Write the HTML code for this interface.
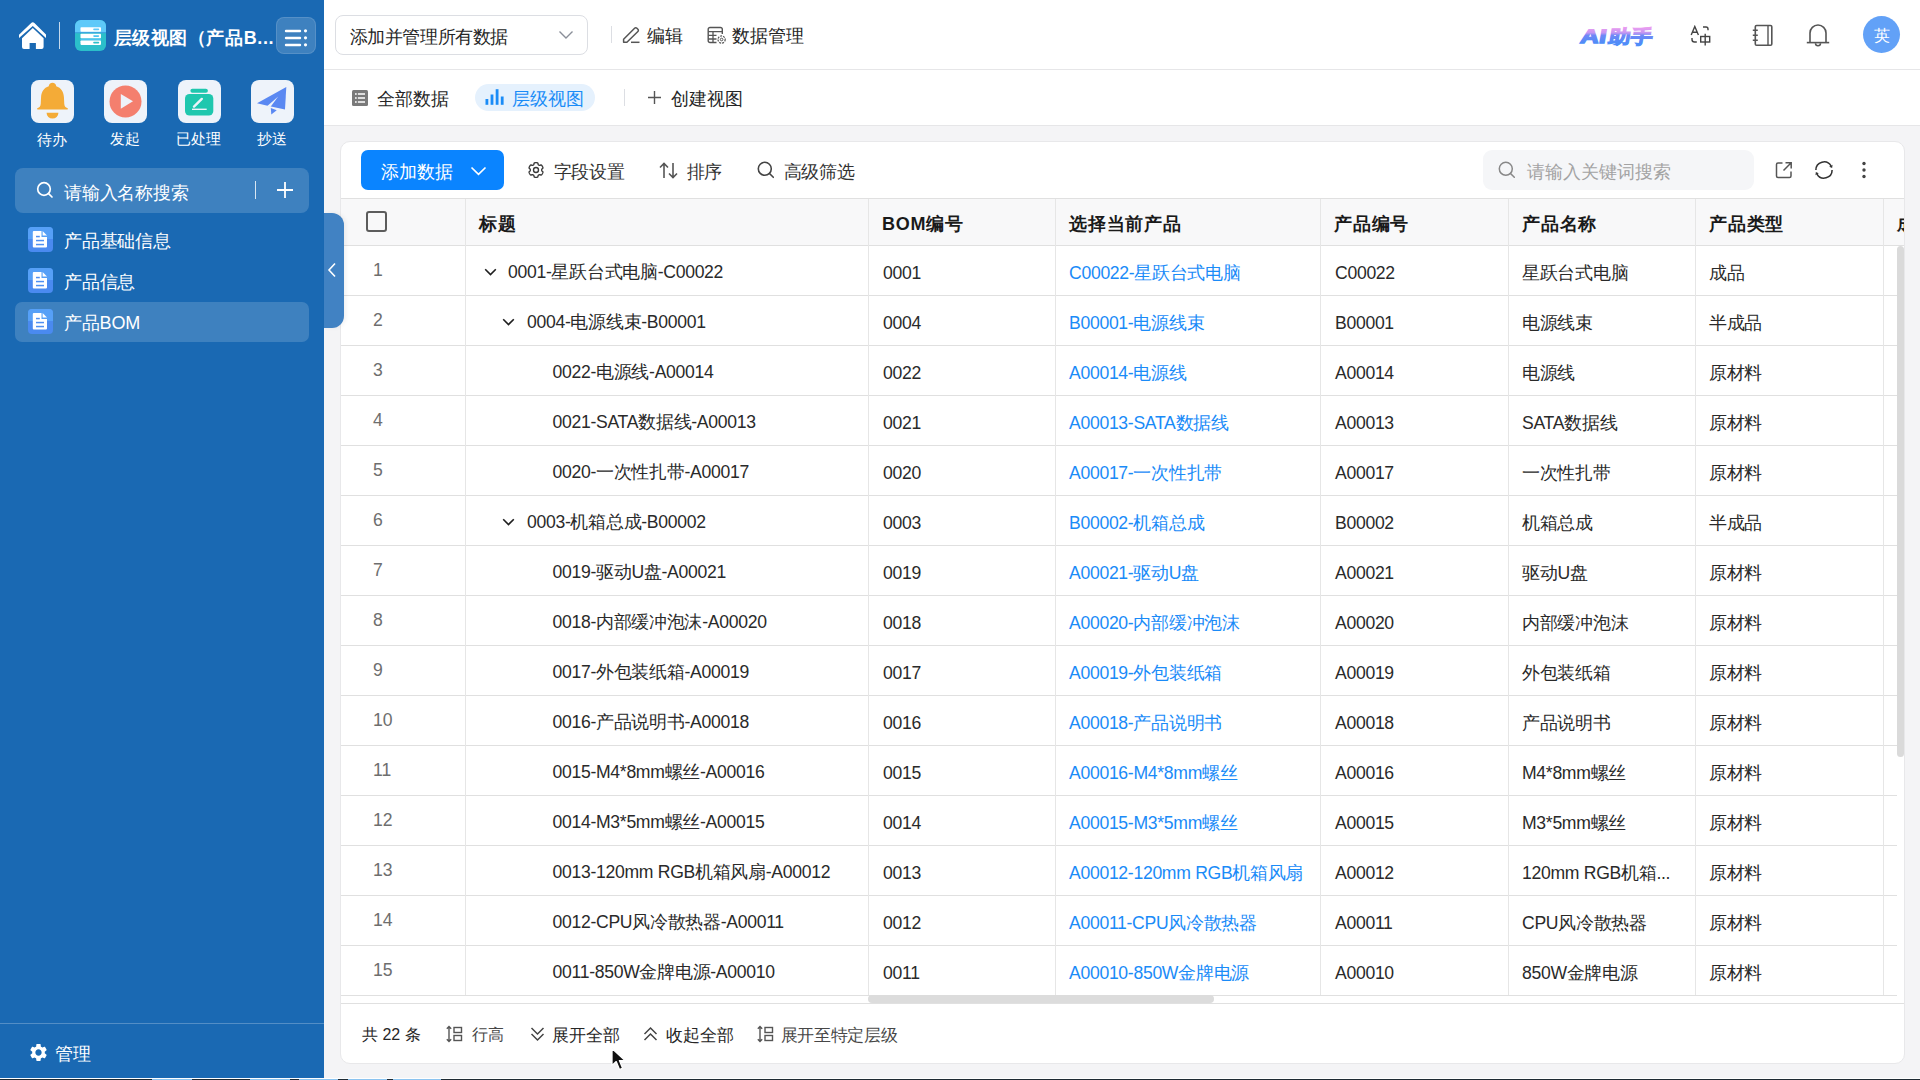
<!DOCTYPE html>
<html><head><meta charset="utf-8">
<style>
*{box-sizing:border-box;margin:0;padding:0}
html,body{width:1920px;height:1080px;overflow:hidden}
body{position:relative;background:#f4f4f6;font-family:"Liberation Sans",sans-serif;color:#262626;font-size:17.6px}
.abs{position:absolute}
#side{position:absolute;left:0;top:0;width:324px;height:1080px;background:#1a69b3;color:#fff}
#top{position:absolute;left:324px;top:0;width:1596px;height:70px;background:#fff;border-bottom:1px solid #e6e6e8}
#tabs{position:absolute;left:324px;top:70px;width:1596px;height:56px;background:#fff;border-bottom:1px solid #e6e6e8}
#card{position:absolute;left:340px;top:141px;width:1565px;height:923px;background:#fff;border:1px solid #e8e8ea;border-radius:10px;overflow:hidden}
.t{position:absolute;white-space:nowrap;line-height:1}
.qa{width:43px;height:43px;border-radius:8px;background:#eef3fa}
.lbl{font-size:15.4px;color:#fff}
.hl{left:0;width:1556px;height:1px;background:#e0e0e0}
.vl{width:1px;background:#e6e6e6}
.th{font-weight:bold;color:#1a1a1a;font-size:18px;letter-spacing:0.75px}
.td{color:#2a2a2a;letter-spacing:-0.3px}
.rn{color:#6e6e6e}
.lk{color:#1a8bf8}
.ft{font-size:16px}
</style></head><body>
<div id="side">
  <!-- home -->
  <svg class="abs" style="left:14px;top:16px" width="40" height="40" viewBox="0 0 40 40">
    <path d="M5 18.7 L17.2 6.9 Q18.8 5.4 20.4 6.9 L32 18.4 L32 21.9 L18.8 9.9 L5 21.9 Z" fill="#fff"/>
    <path d="M8 22.3 L18.8 11.9 L29.6 22.3 V31 a2 2 0 0 1 -2 2 H21.9 V27 H15.6 V33 H10 a2 2 0 0 1 -2 -2 Z" fill="#fff"/>
  </svg>
  <div class="abs" style="left:59px;top:22px;width:1px;height:27px;background:rgba(255,255,255,.75)"></div>
  <!-- app icon -->
  <svg class="abs" style="left:75px;top:20px" width="31" height="31" viewBox="0 0 31 31">
    <defs><clipPath id="ac"><rect width="31" height="31" rx="6"/></clipPath></defs>
    <g clip-path="url(#ac)">
      <rect width="31" height="31" fill="#2bbfca"/>
      <rect width="31" height="12.3" fill="#5ec9f9"/>
      <rect y="12.3" width="31" height="0.9" fill="#3d9ae6"/>
      <rect x="5.5" y="18.5" width="20.5" height="2" fill="#4cc3f2"/>
    </g>
    <rect x="5.5" y="7.2" width="20.5" height="4.5" rx="0.8" fill="#fff"/>
    <rect x="5.5" y="13.8" width="20.5" height="4.5" rx="0.8" fill="#fff"/>
    <rect x="5.5" y="20.4" width="20.5" height="4.5" rx="0.8" fill="#fff"/>
    <rect x="18.2" y="8.6" width="6" height="1.7" rx="0.8" fill="#5ec9f9"/>
    <rect x="18.2" y="15.2" width="6" height="1.7" rx="0.8" fill="#4cc3f2"/>
    <rect x="18.2" y="21.8" width="6" height="1.7" rx="0.8" fill="#2bbfca"/>
  </svg>
  <div class="t" style="left:113.5px;top:28.5px;font-size:18px;letter-spacing:0.6px;font-weight:bold;color:#fff">层级视图（产品B...</div>
  <!-- menu btn -->
  <div class="abs" style="left:276px;top:17px;width:40px;height:37px;border-radius:8px;background:rgba(255,255,255,.16);border:1px solid rgba(255,255,255,.12)"></div>
  <svg class="abs" style="left:284px;top:28.7px" width="24" height="19" viewBox="0 0 24 19">
    <g stroke="#fff" stroke-width="2.4" stroke-linecap="round">
      <line x1="2" y1="2" x2="16" y2="2"/><line x1="2" y1="9" x2="16" y2="9"/><line x1="2" y1="16" x2="16" y2="16"/>
    </g>
    <g fill="#fff"><circle cx="21.5" cy="1.8" r="1.6"/><circle cx="21.5" cy="8.8" r="1.6"/><circle cx="21.5" cy="15.8" r="1.6"/></g>
  </svg>
  <!-- quick actions -->
  <div class="abs qa" style="left:31px;top:80px"></div>
  <div class="abs qa" style="left:104px;top:80px"></div>
  <div class="abs qa" style="left:178px;top:80px"></div>
  <div class="abs qa" style="left:251px;top:80px"></div>
  <svg class="abs" style="left:31px;top:80px" width="43" height="43" viewBox="0 0 43 43"><g transform="translate(21.5 20) scale(1.04) translate(-21.5 -23.8)">
    <path d="M21.5 7.3 c2 0 3.4 1.2 3.6 3.2 c4.6 1.4 7.1 5.3 7.4 10.6 l0.3 6.2 c0.2 2.4 1.3 3.6 2.9 4.3 c0.7 0.3 0.8 1.3 0.1 1.3 H7.2 c-0.7 0 -0.6 -1 0.1 -1.3 c1.6 -0.7 2.7 -1.9 2.9 -4.3 l0.3 -6.2 c0.3 -5.3 2.8 -9.2 7.4 -10.6 c0.2 -2 1.6 -3.2 3.6 -3.2 Z" fill="#f4ab37"/>
    <path d="M15.8 36 h11.4 a5.7 5.7 0 0 1 -11.4 0 Z" fill="#f4ab37"/></g>
  </svg>
  <svg class="abs" style="left:104px;top:80px" width="43" height="43" viewBox="0 0 43 43">
    <circle cx="21.5" cy="21.5" r="16" fill="#f47f6e"/>
    <path d="M16.8 14 L29 21.3 L16.8 28.7 Z" fill="#eef3fa"/>
  </svg>
  <svg class="abs" style="left:178px;top:80px" width="43" height="43" viewBox="0 0 43 43">
    <rect x="12.4" y="8.8" width="17.5" height="4" rx="2" fill="#1fc7ae"/>
    <rect x="7" y="14" width="28.3" height="21.6" rx="4.5" fill="#1fc7ae"/>
    <path d="M16 26.6 L23.8 18.9" stroke="#eef3fa" stroke-width="2.4" stroke-linecap="round"/>
    <rect x="14" y="28.6" width="14.7" height="1.4" fill="#eef3fa"/>
  </svg>
  <svg class="abs" style="left:251px;top:80px" width="43" height="43" viewBox="0 0 43 43">
    <path d="M35.3 7 L6 23.3 L16.5 25.8 L34 29.6 Z" fill="#5a88f2"/>
    <path d="M16.3 25.9 L27.2 16.6 L19.4 27 Z" fill="#eef3fa"/>
    <path d="M19.8 27.9 L25.7 30.2 L20.3 34.6 Z" fill="#5a88f2"/>
  </svg>
  <div class="t lbl" style="left:37px;top:131.5px">待办</div>
  <div class="t lbl" style="left:110px;top:131px">发起</div>
  <div class="t lbl" style="left:176px;top:131px">已处理</div>
  <div class="t lbl" style="left:257px;top:131px">抄送</div>
  <!-- search -->
  <div class="abs" style="left:15px;top:168px;width:294px;height:45px;border-radius:8px;background:rgba(255,255,255,.16)"></div>
  <svg class="abs" style="left:36px;top:181px" width="18" height="18" viewBox="0 0 18 18">
    <circle cx="8" cy="8" r="6.3" fill="none" stroke="#fff" stroke-width="1.7"/>
    <line x1="12.6" y1="12.6" x2="16" y2="16" stroke="#fff" stroke-width="1.7" stroke-linecap="round"/>
  </svg>
  <div class="t" style="left:64px;top:183.5px;font-size:18px;letter-spacing:-0.2px;color:#fff">请输入名称搜索</div>
  <div class="abs" style="left:255px;top:181px;width:1px;height:18px;background:rgba(255,255,255,.8)"></div>
  <svg class="abs" style="left:276px;top:181px" width="18" height="18" viewBox="0 0 18 18">
    <path d="M9 1 V17 M1 9 H17" stroke="#fff" stroke-width="1.8"/>
  </svg>
  <!-- nav -->
  <div class="abs" style="left:15px;top:302px;width:294px;height:40px;border-radius:7px;background:rgba(255,255,255,.16)"></div>
  <svg class="abs doc" style="left:28px;top:227px" width="25" height="25" viewBox="0 0 25 25"><use href="#docico"/></svg>
  <svg class="abs doc" style="left:28px;top:268px" width="25" height="25" viewBox="0 0 25 25"><use href="#docico"/></svg>
  <svg class="abs doc" style="left:28px;top:309px" width="25" height="25" viewBox="0 0 25 25"><use href="#docico"/></svg>
  <div class="t" style="left:64px;top:232px;font-size:18px;letter-spacing:-0.2px;color:#fff">产品基础信息</div>
  <div class="t" style="left:64px;top:273px;font-size:18px;letter-spacing:-0.2px;color:#fff">产品信息</div>
  <div class="t" style="left:64px;top:314px;font-size:18px;letter-spacing:-0.2px;color:#fff">产品BOM</div>
  <!-- bottom -->
  <div class="abs" style="left:0;top:1023px;width:324px;height:1px;background:rgba(255,255,255,.25)"></div>
  <svg class="abs" style="left:27.5px;top:1041.5px" width="21" height="21" viewBox="0 0 24 24">
    <path fill="#fff" d="M19.14 12.94c.04-.3.06-.61.06-.94 0-.32-.02-.64-.07-.94l2.03-1.58c.18-.14.23-.41.12-.61l-1.92-3.32c-.12-.22-.37-.29-.59-.22l-2.39.96c-.5-.38-1.03-.7-1.62-.94l-.36-2.54c-.04-.24-.24-.41-.48-.41h-3.84c-.24 0-.43.17-.47.41l-.36 2.54c-.59.24-1.13.57-1.62.94l-2.39-.96c-.22-.08-.47 0-.59.22L2.74 8.87c-.12.21-.08.47.12.61l2.03 1.58c-.05.3-.09.63-.09.94s.02.64.07.94l-2.03 1.58c-.18.14-.23.41-.12.61l1.92 3.32c.12.22.37.29.59.22l2.39-.96c.5.38 1.03.7 1.62.94l.36 2.54c.05.24.24.41.48.41h3.84c.24 0 .44-.17.47-.41l.36-2.54c.59-.24 1.13-.56 1.62-.94l2.39.96c.22.08.47 0 .59-.22l1.92-3.32c.12-.22.07-.47-.12-.61l-2.01-1.58zM12 15.6c-1.98 0-3.6-1.62-3.6-3.6s1.62-3.6 3.6-3.6 3.6 1.62 3.6 3.6-1.62 3.6-3.6 3.6z"/>
  </svg>
  <div class="t" style="left:55px;top:1046px;font-size:17.6px;color:#fff">管理</div>
</div>
<svg width="0" height="0" style="position:absolute">
  <defs>
    <g id="docico">
      <rect x="0" y="0" width="25" height="25" rx="4" fill="#4a8af0"/>
      <path d="M0 4 a4 4 0 0 1 4 -4 H21 a4 4 0 0 1 4 4 V12 H0 Z" fill="#56a0f7"/>
      <path d="M5.8 4 H13.5 V10 H19 V19.5 a1 1 0 0 1 -1 1 H5.8 a1 1 0 0 1 -1 -1 V5 a1 1 0 0 1 1 -1 Z" fill="#fff"/>
      <path d="M14.6 4 L19 8.6 H14.6 Z" fill="#fff"/>
      <rect x="8" y="8.8" width="3.8" height="1.5" fill="#4f90f2"/>
      <rect x="8" y="12.8" width="8" height="1.5" fill="#4f90f2"/>
      <rect x="8" y="16.8" width="8" height="1.5" fill="#4f90f2"/>
    </g>
  </defs>
</svg>
<div id="top">
  <div class="abs" style="left:11px;top:15px;width:253px;height:40px;border:1px solid #dcdee3;border-radius:8px"></div>
  <div class="t" style="left:25.5px;top:27.5px;font-size:18px;letter-spacing:-0.4px">添加并管理所有数据</div>
  <svg class="abs" style="left:234px;top:30px" width="16" height="10" viewBox="0 0 16 10"><path d="M1.5 1.5 L8 8 L14.5 1.5" fill="none" stroke="#8a8f99" stroke-width="1.4"/></svg>
  <div class="abs" style="left:287px;top:26px;width:1px;height:17px;background:#dcdee3"></div>
  <svg class="abs" style="left:298px;top:25px" width="19" height="19" viewBox="0 0 19 19">
    <path d="M1.6 17.3 V14.2 L12.6 3.2 a1.6 1.6 0 0 1 2.3 0 L15.9 4.2 a1.6 1.6 0 0 1 0 2.3 L4.9 17.3 Z" fill="none" stroke="#555" stroke-width="1.5" stroke-linejoin="round"/>
    <line x1="9" y1="17.3" x2="17.5" y2="17.3" stroke="#555" stroke-width="1.5"/>
  </svg>
  <div class="t" style="left:323px;top:27.5px">编辑</div>
  <svg class="abs" style="left:383px;top:26px" width="20" height="19" viewBox="0 0 20 19">
    <path d="M9.5 16.5 H3 a1.8 1.8 0 0 1 -1.8 -1.8 V3.3 A1.8 1.8 0 0 1 3 1.5 H13.5 a1.8 1.8 0 0 1 1.8 1.8 V8" fill="none" stroke="#555" stroke-width="1.4"/>
    <path d="M1.2 5.6 H15.3 M1.2 9.4 H9.5 M1.2 13 H9.5 M6 5.6 V16.5" fill="none" stroke="#555" stroke-width="1.3"/>
    <circle cx="14.6" cy="13.5" r="3.6" fill="none" stroke="#555" stroke-width="1.2" stroke-dasharray="2 1"/>
    <circle cx="14.6" cy="13.5" r="1.3" fill="none" stroke="#555" stroke-width="1"/>
  </svg>
  <div class="t" style="left:408px;top:27.5px">数据管理</div>
  <!-- AI -->
  <svg class="abs" style="left:1253px;top:21px" width="82" height="26" viewBox="0 0 82 26">
    <defs><linearGradient id="aig" x1="0" y1="5" x2="0" y2="22" gradientUnits="userSpaceOnUse">
      <stop offset="0.1" stop-color="#ea9cf0"/><stop offset="0.4" stop-color="#c497f2"/><stop offset="0.55" stop-color="#7088f6"/><stop offset="1" stop-color="#4f8cf8"/></linearGradient></defs>
    <g transform="translate(3.5 0) skewX(-10)">
    <text x="3" y="22" font-family="Liberation Sans" font-weight="bold" font-size="19.5" fill="url(#aig)" stroke="url(#aig)" stroke-width="1.3" textLength="26" lengthAdjust="spacingAndGlyphs">AI</text>
    <text x="31" y="21.8" font-weight="bold" font-size="18.5" fill="url(#aig)" stroke="url(#aig)" stroke-width="1.1" textLength="44" lengthAdjust="spacingAndGlyphs">助手</text>
    </g>
  </svg>
  <!-- translate -->
  <svg class="abs" style="left:1366px;top:25px" width="22" height="22" viewBox="0 0 22 22">
    <path d="M1.2 10 L4.8 1.5 L8.4 10 M2.4 7.2 H7.2" fill="none" stroke="#444" stroke-width="1.4"/>
    <path d="M13 2 h3 a2 2 0 0 1 2 2 v1.3" fill="none" stroke="#444" stroke-width="1.4"/>
    <path d="M2 13 v1.5 a2.5 2.5 0 0 0 2.5 2.5 h2.3" fill="none" stroke="#444" stroke-width="1.4"/>
    <rect x="10.7" y="11.5" width="9" height="5.5" fill="none" stroke="#444" stroke-width="1.4"/>
    <line x1="15.2" y1="8.8" x2="15.2" y2="20.5" stroke="#444" stroke-width="1.4"/>
  </svg>
  <!-- notebook -->
  <svg class="abs" style="left:1428px;top:24px" width="22" height="23" viewBox="0 0 22 23">
    <rect x="3.3" y="1.5" width="16.5" height="19.8" rx="1.3" fill="none" stroke="#555" stroke-width="1.6"/>
    <line x1="16" y1="1.5" x2="16" y2="21.3" stroke="#555" stroke-width="1.4"/>
    <path d="M0.8 6.3 H5.8 M0.8 11.3 H5.8 M0.8 16.2 H5.8" stroke="#555" stroke-width="1.6"/>
  </svg>
  <!-- bell -->
  <svg class="abs" style="left:1482px;top:23px" width="24" height="25" viewBox="0 0 24 25">
    <path d="M4 19.5 V10 a8 8 0 0 1 16 0 V19.5" fill="none" stroke="#555" stroke-width="1.6"/>
    <line x1="0.8" y1="19.6" x2="23.2" y2="19.6" stroke="#555" stroke-width="1.6"/>
    <path d="M9.5 20.3 a2.5 2.5 0 0 0 5 0" fill="none" stroke="#555" stroke-width="1.5"/>
  </svg>
  <!-- avatar -->
  <div class="abs" style="left:1539px;top:16px;width:37px;height:37px;border-radius:50%;background:#62a1f7"></div>
  <div class="t" style="left:1550px;top:28px;font-size:16px;color:#fff">英</div>
</div>
<div id="tabs">
  <svg class="abs" style="left:28px;top:20px" width="16" height="16" viewBox="0 0 16 16">
    <rect x="0" y="0" width="16" height="16" rx="1.5" fill="#7a7a7a"/>
    <path d="M3 4 H13 M3 8 H13 M3 12 H13" stroke="#fff" stroke-width="1.6"/>
    <path d="M5.3 2 V14" stroke="#7a7a7a" stroke-width="1.2"/>
  </svg>
  <div class="t" style="left:53px;top:20.5px">全部数据</div>
  <div class="abs" style="left:151px;top:14px;width:120px;height:27px;border-radius:14px;background:#e5f1fd"></div>
  <svg class="abs" style="left:161px;top:18px" width="19" height="18" viewBox="0 0 19 18">
    <rect x="0.5" y="11" width="2.8" height="5.8" fill="#1a8cf7"/>
    <rect x="5.6" y="6.5" width="2.8" height="10.3" fill="#1a8cf7"/>
    <rect x="10.7" y="1.2" width="2.8" height="15.6" fill="#1a8cf7"/>
    <rect x="15.8" y="8.5" width="2.8" height="8.3" fill="#1a8cf7"/>
  </svg>
  <div class="t" style="left:188px;top:20.5px;color:#1a8cf7">层级视图</div>
  <div class="abs" style="left:300px;top:19px;width:1px;height:17px;background:#dcdee3"></div>
  <svg class="abs" style="left:323px;top:20px" width="15" height="15" viewBox="0 0 15 15"><path d="M7.5 1 V14 M1 7.5 H14" stroke="#555" stroke-width="1.4"/></svg>
  <div class="t" style="left:347px;top:20.5px">创建视图</div>
</div>
<div id="card">
  <!-- toolbar; inner origin (341,142) -->
  <div class="abs" style="left:20px;top:8px;width:143px;height:40px;border-radius:7px;background:#0a84ff"></div>
  <div class="t" style="left:40px;top:21.5px;color:#fff">添加数据</div>
  <svg class="abs" style="left:129px;top:24px" width="17" height="10" viewBox="0 0 17 10"><path d="M1.5 1.5 L8.5 8.3 L15.5 1.5" fill="none" stroke="#fff" stroke-width="1.7"/></svg>
  <svg class="abs" style="left:186px;top:19px" width="18" height="18" viewBox="0 0 18 18">
    <path d="M9.00 16.35 L8.52 16.33 L8.04 16.28 L7.57 16.18 L7.16 15.87 L6.97 14.97 L6.78 14.37 L6.47 14.12 L6.15 13.94 L5.83 13.75 L5.46 13.61 L4.84 13.74 L3.97 14.03 L3.49 13.83 L3.17 13.47 L2.89 13.08 L2.63 12.68 L2.41 12.25 L2.21 11.81 L2.07 11.35 L2.13 10.84 L2.81 10.23 L3.24 9.76 L3.30 9.37 L3.30 9.00 L3.30 8.63 L3.24 8.24 L2.81 7.77 L2.13 7.16 L2.07 6.65 L2.21 6.19 L2.41 5.75 L2.63 5.33 L2.89 4.92 L3.17 4.53 L3.49 4.17 L3.97 3.97 L4.84 4.26 L5.46 4.39 L5.83 4.25 L6.15 4.06 L6.47 3.88 L6.78 3.63 L6.97 3.03 L7.16 2.13 L7.57 1.82 L8.04 1.72 L8.52 1.67 L9.00 1.65 L9.48 1.67 L9.96 1.72 L10.43 1.82 L10.84 2.13 L11.03 3.03 L11.22 3.63 L11.53 3.88 L11.85 4.06 L12.17 4.25 L12.54 4.39 L13.16 4.26 L14.03 3.97 L14.51 4.17 L14.83 4.53 L15.11 4.92 L15.37 5.32 L15.59 5.75 L15.79 6.19 L15.93 6.65 L15.87 7.16 L15.19 7.77 L14.76 8.24 L14.70 8.63 L14.70 9.00 L14.70 9.37 L14.76 9.76 L15.19 10.23 L15.87 10.84 L15.93 11.35 L15.79 11.81 L15.59 12.25 L15.37 12.68 L15.11 13.08 L14.83 13.47 L14.51 13.83 L14.03 14.03 L13.16 13.74 L12.54 13.61 L12.17 13.75 L11.85 13.94 L11.53 14.12 L11.22 14.37 L11.03 14.97 L10.84 15.87 L10.43 16.18 L9.96 16.28 L9.48 16.33 Z" fill="none" stroke="#3a3a3a" stroke-width="1.35" stroke-linejoin="round"/>
    <circle cx="9" cy="9" r="2.5" fill="none" stroke="#3a3a3a" stroke-width="1.35"/>
  </svg>
  <div class="t" style="left:212.5px;top:20.5px;font-size:18px;letter-spacing:-0.25px;color:#333">字段设置</div>
  <svg class="abs" style="left:318px;top:20px" width="19" height="17" viewBox="0 0 19 17">
    <path d="M5 16 V1.5 M1 5.5 L5 1.5 L9 5.5" fill="none" stroke="#555" stroke-width="1.6"/>
    <path d="M14 1 V15.5 M10 11.5 L14 15.5 L18 11.5" fill="none" stroke="#555" stroke-width="1.6"/>
  </svg>
  <div class="t" style="left:345.5px;top:20.5px;font-size:18px;letter-spacing:-0.25px;color:#333">排序</div>
  <svg class="abs" style="left:416px;top:19px" width="18" height="18" viewBox="0 0 18 18">
    <circle cx="7.8" cy="7.8" r="6.5" fill="none" stroke="#444" stroke-width="1.6"/>
    <line x1="12.5" y1="12.5" x2="16.3" y2="16.3" stroke="#444" stroke-width="1.6" stroke-linecap="round"/>
  </svg>
  <div class="t" style="left:442.5px;top:20.5px;font-size:18px;letter-spacing:-0.25px;color:#333">高级筛选</div>
  <div class="abs" style="left:1142px;top:8px;width:271px;height:40px;border-radius:9px;background:#f5f6f8"></div>
  <svg class="abs" style="left:1157px;top:19px" width="18" height="18" viewBox="0 0 18 18">
    <circle cx="7.8" cy="7.8" r="6.5" fill="none" stroke="#888" stroke-width="1.5"/>
    <line x1="12.5" y1="12.5" x2="16.3" y2="16.3" stroke="#888" stroke-width="1.5" stroke-linecap="round"/>
  </svg>
  <div class="t" style="left:1186px;top:21.5px;color:#a3a3a3">请输入关键词搜索</div>
  <svg class="abs" style="left:1434px;top:19px" width="18" height="18" viewBox="0 0 18 18">
    <path d="M7.5 2 H3 a1.5 1.5 0 0 0 -1.5 1.5 V15 a1.5 1.5 0 0 0 1.5 1.5 H14.5 a1.5 1.5 0 0 0 1.5 -1.5 V10.5" fill="none" stroke="#555" stroke-width="1.5"/>
    <path d="M10.5 1.8 H16.2 V7.5 M16.2 1.8 L8.5 9.5" fill="none" stroke="#555" stroke-width="1.5"/>
  </svg>
  <svg class="abs" style="left:1473px;top:17.5px" width="20" height="20" viewBox="0 0 20 20" overflow="visible">
    <path d="M17.01 5.95 A8.1 8.1 0 0 0 1.90 10.00" fill="none" stroke="#333" stroke-width="1.55"/>
    <path d="M2.99 14.05 A8.1 8.1 0 0 0 18.10 10.00" fill="none" stroke="#333" stroke-width="1.55"/>
    <path d="M15.22 6.64 L18.51 4.74 L18.16 7.94 Z" fill="#333"/>
    <path d="M4.78 13.36 L1.49 15.26 L1.84 12.06 Z" fill="#333"/>
  </svg>
  <svg class="abs" style="left:1519.8px;top:19px" width="6" height="18" viewBox="0 0 6 18">
    <circle cx="3" cy="2.5" r="1.7" fill="#444"/><circle cx="3" cy="9" r="1.7" fill="#444"/><circle cx="3" cy="15.5" r="1.7" fill="#444"/>
  </svg>
  <div class="abs" style="left:0;top:57px;width:1563px;height:46px;background:#f8f8f9"></div>
<div class="abs hl" style="top:56px;width:1563px"></div>
<div class="abs hl" style="top:103px;width:1563px"></div>
<div class="abs hl" style="top:153px"></div>
<div class="abs hl" style="top:203px"></div>
<div class="abs hl" style="top:253px"></div>
<div class="abs hl" style="top:303px"></div>
<div class="abs hl" style="top:353px"></div>
<div class="abs hl" style="top:403px"></div>
<div class="abs hl" style="top:453px"></div>
<div class="abs hl" style="top:503px"></div>
<div class="abs hl" style="top:553px"></div>
<div class="abs hl" style="top:603px"></div>
<div class="abs hl" style="top:653px"></div>
<div class="abs hl" style="top:703px"></div>
<div class="abs hl" style="top:753px"></div>
<div class="abs hl" style="top:803px"></div>
<div class="abs hl" style="top:853px"></div>
<div class="abs hl" style="top:861px;width:1563px"></div>
<div class="abs vl" style="left:124px;top:57px;height:796px"></div>
<div class="abs vl" style="left:527px;top:57px;height:796px"></div>
<div class="abs vl" style="left:714px;top:57px;height:796px"></div>
<div class="abs vl" style="left:979px;top:57px;height:796px"></div>
<div class="abs vl" style="left:1167px;top:57px;height:796px"></div>
<div class="abs vl" style="left:1354px;top:57px;height:796px"></div>
<div class="abs vl" style="left:1542px;top:57px;height:796px"></div>
<div class="abs" style="left:25px;top:69px;width:21px;height:21px;border:2px solid #5c5c5c;border-radius:3px"></div>
<div class="t th" style="left:138px;top:72.5px">标题</div>
<div class="t th" style="left:541px;top:72.5px">BOM编号</div>
<div class="t th" style="left:728px;top:72.5px">选择当前产品</div>
<div class="t th" style="left:993px;top:72.5px">产品编号</div>
<div class="t th" style="left:1181px;top:72.5px">产品名称</div>
<div class="t th" style="left:1368px;top:72.5px">产品类型</div>
<div class="t th" style="left:1556px;top:72.5px">成本</div>
<div class="t rn" style="left:32px;top:120px">1</div>
<svg class="abs" style="left:143px;top:126px" width="13" height="8" viewBox="0 0 13 8"><path d="M1.2 1.2 L6.5 6.5 L11.8 1.2" fill="none" stroke="#1f1f1f" stroke-width="1.6"/></svg>
<div class="t td" style="left:167px;top:122px">0001-星跃台式电脑-C00022</div>
<div class="t td" style="left:542px;top:123px">0001</div>
<div class="t td lk" style="left:728px;top:123px">C00022-星跃台式电脑</div>
<div class="t td" style="left:994px;top:123px">C00022</div>
<div class="t td" style="left:1181px;top:123px">星跃台式电脑</div>
<div class="t td" style="left:1368px;top:123px">成品</div>
<div class="t rn" style="left:32px;top:170px">2</div>
<svg class="abs" style="left:161px;top:176px" width="13" height="8" viewBox="0 0 13 8"><path d="M1.2 1.2 L6.5 6.5 L11.8 1.2" fill="none" stroke="#1f1f1f" stroke-width="1.6"/></svg>
<div class="t td" style="left:186px;top:172px">0004-电源线束-B00001</div>
<div class="t td" style="left:542px;top:173px">0004</div>
<div class="t td lk" style="left:728px;top:173px">B00001-电源线束</div>
<div class="t td" style="left:994px;top:173px">B00001</div>
<div class="t td" style="left:1181px;top:173px">电源线束</div>
<div class="t td" style="left:1368px;top:173px">半成品</div>
<div class="t rn" style="left:32px;top:220px">3</div>
<div class="t td" style="left:211.5px;top:222px">0022-电源线-A00014</div>
<div class="t td" style="left:542px;top:223px">0022</div>
<div class="t td lk" style="left:728px;top:223px">A00014-电源线</div>
<div class="t td" style="left:994px;top:223px">A00014</div>
<div class="t td" style="left:1181px;top:223px">电源线</div>
<div class="t td" style="left:1368px;top:223px">原材料</div>
<div class="t rn" style="left:32px;top:270px">4</div>
<div class="t td" style="left:211.5px;top:272px">0021-SATA数据线-A00013</div>
<div class="t td" style="left:542px;top:273px">0021</div>
<div class="t td lk" style="left:728px;top:273px">A00013-SATA数据线</div>
<div class="t td" style="left:994px;top:273px">A00013</div>
<div class="t td" style="left:1181px;top:273px">SATA数据线</div>
<div class="t td" style="left:1368px;top:273px">原材料</div>
<div class="t rn" style="left:32px;top:320px">5</div>
<div class="t td" style="left:211.5px;top:322px">0020-一次性扎带-A00017</div>
<div class="t td" style="left:542px;top:323px">0020</div>
<div class="t td lk" style="left:728px;top:323px">A00017-一次性扎带</div>
<div class="t td" style="left:994px;top:323px">A00017</div>
<div class="t td" style="left:1181px;top:323px">一次性扎带</div>
<div class="t td" style="left:1368px;top:323px">原材料</div>
<div class="t rn" style="left:32px;top:370px">6</div>
<svg class="abs" style="left:161px;top:376px" width="13" height="8" viewBox="0 0 13 8"><path d="M1.2 1.2 L6.5 6.5 L11.8 1.2" fill="none" stroke="#1f1f1f" stroke-width="1.6"/></svg>
<div class="t td" style="left:186px;top:372px">0003-机箱总成-B00002</div>
<div class="t td" style="left:542px;top:373px">0003</div>
<div class="t td lk" style="left:728px;top:373px">B00002-机箱总成</div>
<div class="t td" style="left:994px;top:373px">B00002</div>
<div class="t td" style="left:1181px;top:373px">机箱总成</div>
<div class="t td" style="left:1368px;top:373px">半成品</div>
<div class="t rn" style="left:32px;top:420px">7</div>
<div class="t td" style="left:211.5px;top:422px">0019-驱动U盘-A00021</div>
<div class="t td" style="left:542px;top:423px">0019</div>
<div class="t td lk" style="left:728px;top:423px">A00021-驱动U盘</div>
<div class="t td" style="left:994px;top:423px">A00021</div>
<div class="t td" style="left:1181px;top:423px">驱动U盘</div>
<div class="t td" style="left:1368px;top:423px">原材料</div>
<div class="t rn" style="left:32px;top:470px">8</div>
<div class="t td" style="left:211.5px;top:472px">0018-内部缓冲泡沫-A00020</div>
<div class="t td" style="left:542px;top:473px">0018</div>
<div class="t td lk" style="left:728px;top:473px">A00020-内部缓冲泡沫</div>
<div class="t td" style="left:994px;top:473px">A00020</div>
<div class="t td" style="left:1181px;top:473px">内部缓冲泡沫</div>
<div class="t td" style="left:1368px;top:473px">原材料</div>
<div class="t rn" style="left:32px;top:520px">9</div>
<div class="t td" style="left:211.5px;top:522px">0017-外包装纸箱-A00019</div>
<div class="t td" style="left:542px;top:523px">0017</div>
<div class="t td lk" style="left:728px;top:523px">A00019-外包装纸箱</div>
<div class="t td" style="left:994px;top:523px">A00019</div>
<div class="t td" style="left:1181px;top:523px">外包装纸箱</div>
<div class="t td" style="left:1368px;top:523px">原材料</div>
<div class="t rn" style="left:32px;top:570px">10</div>
<div class="t td" style="left:211.5px;top:572px">0016-产品说明书-A00018</div>
<div class="t td" style="left:542px;top:573px">0016</div>
<div class="t td lk" style="left:728px;top:573px">A00018-产品说明书</div>
<div class="t td" style="left:994px;top:573px">A00018</div>
<div class="t td" style="left:1181px;top:573px">产品说明书</div>
<div class="t td" style="left:1368px;top:573px">原材料</div>
<div class="t rn" style="left:32px;top:620px">11</div>
<div class="t td" style="left:211.5px;top:622px">0015-M4*8mm螺丝-A00016</div>
<div class="t td" style="left:542px;top:623px">0015</div>
<div class="t td lk" style="left:728px;top:623px">A00016-M4*8mm螺丝</div>
<div class="t td" style="left:994px;top:623px">A00016</div>
<div class="t td" style="left:1181px;top:623px">M4*8mm螺丝</div>
<div class="t td" style="left:1368px;top:623px">原材料</div>
<div class="t rn" style="left:32px;top:670px">12</div>
<div class="t td" style="left:211.5px;top:672px">0014-M3*5mm螺丝-A00015</div>
<div class="t td" style="left:542px;top:673px">0014</div>
<div class="t td lk" style="left:728px;top:673px">A00015-M3*5mm螺丝</div>
<div class="t td" style="left:994px;top:673px">A00015</div>
<div class="t td" style="left:1181px;top:673px">M3*5mm螺丝</div>
<div class="t td" style="left:1368px;top:673px">原材料</div>
<div class="t rn" style="left:32px;top:720px">13</div>
<div class="t td" style="left:211.5px;top:722px">0013-120mm RGB机箱风扇-A00012</div>
<div class="t td" style="left:542px;top:723px">0013</div>
<div class="t td lk" style="left:728px;top:723px">A00012-120mm RGB机箱风扇</div>
<div class="t td" style="left:994px;top:723px">A00012</div>
<div class="t td" style="left:1181px;top:723px">120mm RGB机箱...</div>
<div class="t td" style="left:1368px;top:723px">原材料</div>
<div class="t rn" style="left:32px;top:770px">14</div>
<div class="t td" style="left:211.5px;top:772px">0012-CPU风冷散热器-A00011</div>
<div class="t td" style="left:542px;top:773px">0012</div>
<div class="t td lk" style="left:728px;top:773px">A00011-CPU风冷散热器</div>
<div class="t td" style="left:994px;top:773px">A00011</div>
<div class="t td" style="left:1181px;top:773px">CPU风冷散热器</div>
<div class="t td" style="left:1368px;top:773px">原材料</div>
<div class="t rn" style="left:32px;top:820px">15</div>
<div class="t td" style="left:211.5px;top:822px">0011-850W金牌电源-A00010</div>
<div class="t td" style="left:542px;top:823px">0011</div>
<div class="t td lk" style="left:728px;top:823px">A00010-850W金牌电源</div>
<div class="t td" style="left:994px;top:823px">A00010</div>
<div class="t td" style="left:1181px;top:823px">850W金牌电源</div>
<div class="t td" style="left:1368px;top:823px">原材料</div>
<div class="abs" style="left:0;top:854px;width:1556px;height:7px;background:#fff"></div>
<div class="abs" style="left:527px;top:853px;width:346px;height:8px;border-radius:4px;background:#dcdcdc"></div>
<div class="abs" style="left:1556px;top:104px;width:7px;height:511px;border-radius:4px;background:#dadada"></div>
  <!-- footer -->
  <div class="t ft" style="left:21px;top:885px;color:#262626">共 22 条</div>
  <svg class="abs" style="left:105px;top:883px" width="17" height="18" viewBox="0 0 17 18">
    <path d="M3 1.5 V16.5 M0.8 3.7 L3 1.5 L5.2 3.7 M0.8 14.3 L3 16.5 L5.2 14.3" fill="none" stroke="#555" stroke-width="1.4"/>
    <rect x="8" y="2.5" width="7.5" height="5" fill="none" stroke="#555" stroke-width="1.4"/>
    <rect x="8" y="10.5" width="7.5" height="5" fill="none" stroke="#555" stroke-width="1.4"/>
  </svg>
  <div class="t ft" style="left:131px;top:885px;color:#474747">行高</div>
  <svg class="abs" style="left:189px;top:884px" width="15" height="16" viewBox="0 0 15 16">
    <path d="M1.5 2 L7.5 8 L13.5 2 M1.5 8 L7.5 14 L13.5 8" fill="none" stroke="#444" stroke-width="1.5"/>
  </svg>
  <div class="t ft" style="left:211px;top:885px;color:#262626;font-size:16.5px">展开全部</div>
  <svg class="abs" style="left:302px;top:884px" width="15" height="16" viewBox="0 0 15 16">
    <path d="M1.5 8 L7.5 2 L13.5 8 M1.5 14 L7.5 8 L13.5 14" fill="none" stroke="#444" stroke-width="1.5"/>
  </svg>
  <div class="t ft" style="left:325px;top:885px;color:#262626;font-size:16.5px">收起全部</div>
  <svg class="abs" style="left:416px;top:883px" width="17" height="18" viewBox="0 0 17 18">
    <path d="M3 1.5 V16.5 M0.8 3.7 L3 1.5 L5.2 3.7 M0.8 14.3 L3 16.5 L5.2 14.3" fill="none" stroke="#555" stroke-width="1.4"/>
    <rect x="8" y="2.5" width="7.5" height="5" fill="none" stroke="#555" stroke-width="1.4"/>
    <rect x="8" y="10.5" width="7.5" height="5" fill="none" stroke="#555" stroke-width="1.4"/>
  </svg>
  <div class="t ft" style="left:439.5px;top:884.5px;color:#474747;font-size:17px;letter-spacing:-0.3px">展开至特定层级</div>
</div>
<!-- collapse tab -->
<div class="abs" style="left:324px;top:213px;width:20px;height:115px;border-radius:0 12px 12px 0;background:#4182c3;box-shadow:2px 0 4px rgba(0,0,0,.06)"></div>
<svg class="abs" style="left:327px;top:262px" width="10" height="16" viewBox="0 0 10 16"><path d="M8 1.5 L2 8 L8 14.5" fill="none" stroke="#fff" stroke-width="1.6"/></svg>
<!-- cursor -->
<svg class="abs" style="left:610px;top:1047px" width="18" height="27" viewBox="0 0 18 27">
  <path d="M2 1.5 V18.5 L6.2 14.6 L9.5 22.5 L12.6 21.2 L9.4 13.6 L15 13.6 Z" fill="#111" stroke="#fff" stroke-width="1.3" stroke-linejoin="round"/>
</svg>
<div class="abs" style="left:0;top:1078px;width:1920px;height:1px;background:#fff"></div>
<div class="abs" style="left:0;top:1079px;width:1920px;height:1px;background:#1e2a33"></div>
<div class="abs" style="left:152px;top:1079px;width:40px;height:1px;background:#8cc4f0"></div>
<div class="abs" style="left:250px;top:1079px;width:40px;height:1px;background:#8cc4f0"></div>
<div class="abs" style="left:299px;top:1079px;width:39px;height:1px;background:#8cc4f0"></div>
<div class="abs" style="left:348px;top:1079px;width:39px;height:1px;background:#8cc4f0"></div>
<div class="abs" style="left:393px;top:1079px;width:48px;height:1px;background:#8cc4f0"></div>

</body></html>
